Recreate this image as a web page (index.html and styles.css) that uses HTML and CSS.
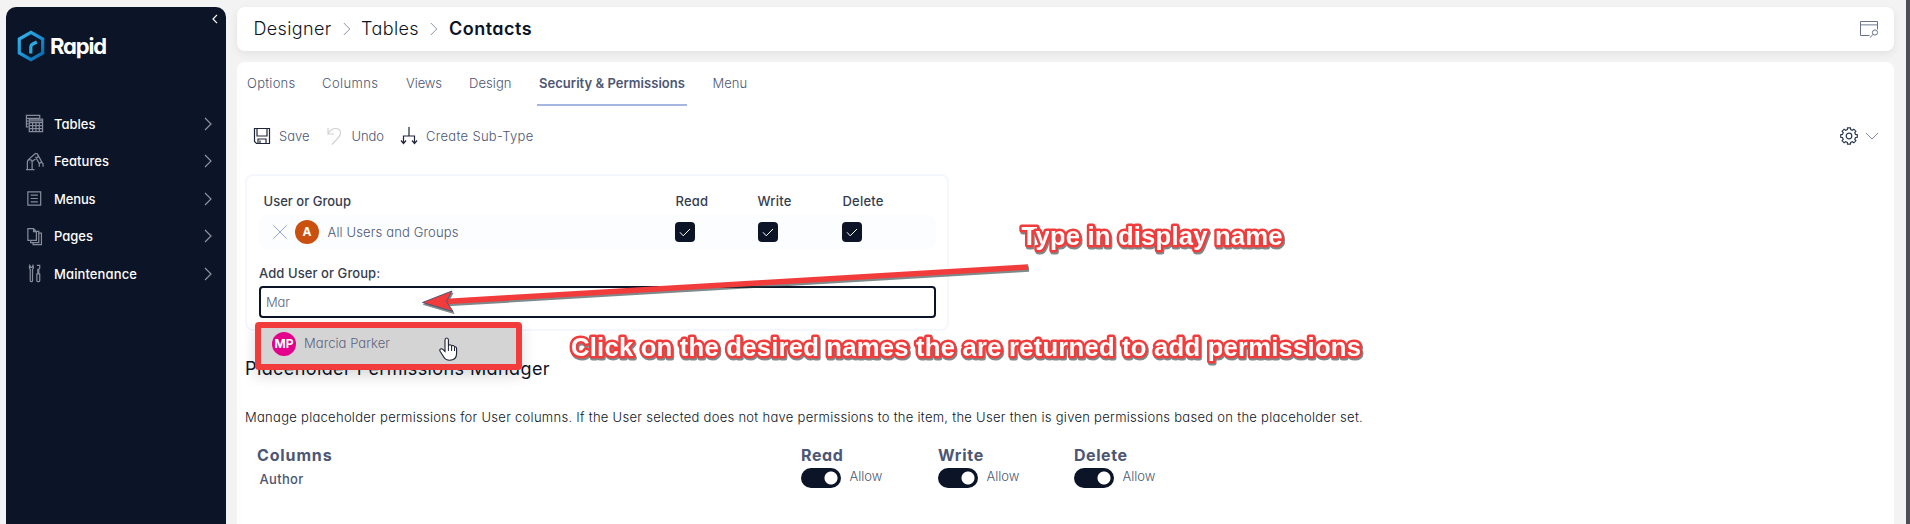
FILE: index.html
```html
<!DOCTYPE html>
<html lang="en">
<head>
<meta charset="utf-8">
<title>Rapid Designer - Contacts</title>
<link rel="stylesheet" href="styles.css">
</head>
<body>
<aside class="sidebar">
  <svg class="collapse" viewBox="0 0 6 10"><path d="M5 .8 1 5l4 4.2"/></svg>
  <div class="brand">
    <svg class="brand-mark" viewBox="0 0 28 32"><defs><linearGradient id="g" x1="0" y1="0" x2="1" y2="1"><stop offset="0" stop-color="#35b6ea"/><stop offset=".5" stop-color="#1a93d6"/><stop offset="1" stop-color="#0465ae"/></linearGradient></defs><path d="M14 2.300 25.700 9v14L14 29.700 2.300 23V9z" fill="none" stroke="url(#g)" stroke-width="3.200"/><path d="M13.800 23.500v-6.500q0-2 2-3l4-2" fill="none" stroke="#29abe2" stroke-width="3.200"/></svg>
    <span class="brand-name">Rapid</span>
  </div>
  <nav class="nav">
    <a class="nav-item"><svg class="nav-icon" viewBox="0 0 20 20"><path d="M3.500 13.500H1.500v-12h14v3M1.500 4.500h14M1.500 7.500h2M1.500 10.500h2M4.500 5.500h14v13h-14zM4.500 9h14M4.500 12.200h14M4.500 15.400h14M8 9v9.500M11.500 9v9.500M15 9v9.500M4.500 7.200h14"/></svg><span class="nav-label">Tables</span><svg class="chev" viewBox="0 0 8 14"><path d="m1 1 6 6-6 6"/></svg></a>
    <a class="nav-item"><svg class="nav-icon" viewBox="0 0 20 20"><path d="M1 18.500h9M2.500 18.500v-8q0-2.500 2.500-2.500t2.500 2.500v8M3.500 8 11 1.500l2 .5 1 3-6.500 5M13 2l5 9M11 5l4 7M15 15.500v-3l2-2 2 2v3M5 11h.5"/></svg><span class="nav-label features">Features</span><svg class="chev" viewBox="0 0 8 14"><path d="m1 1 6 6-6 6"/></svg></a>
    <a class="nav-item"><svg class="nav-icon" viewBox="0 0 20 20"><path d="M3 3h13.500v14H3zM6 6.500h7.500M6 10h7.500M6 13.500h7.500"/></svg><span class="nav-label menus">Menus</span><svg class="chev" viewBox="0 0 8 14"><path d="m1 1 6 6-6 6"/></svg></a>
    <a class="nav-item"><svg class="nav-icon" viewBox="0 0 20 20"><path d="M3 1.800h6l3 3v9.400H3zM9 1.800v3h3M12.500 4.500h2v12H6v-2M15 6.500h2.300v12H8.500v-2"/></svg><span class="nav-label">Pages</span><svg class="chev" viewBox="0 0 8 14"><path d="m1 1 6 6-6 6"/></svg></a>
    <a class="nav-item"><svg class="nav-icon" viewBox="0 0 20 20"><path d="M5 1.500q-1 3 .5 4v12q0 1 1.200 1t1.200-1v-12q1.500-1 .5-4l-1 2H6zM12.500 1.500h3v3l-1 1v5M13.500 5v5.500M12 10.500h4M12.500 10.500v7q0 1 1.500 1t1.500-1v-7"/></svg><span class="nav-label maintenance">Maintenance</span><svg class="chev" viewBox="0 0 8 14"><path d="m1 1 6 6-6 6"/></svg></a>
  </nav>
</aside>
<main class="main">
  <header class="topbar">
    <span class="crumb c1">Designer</span>
    <svg class="crumb-sep" viewBox="0 0 8 14"><path d="m.8 1 6 6-6 6"/></svg>
    <span class="crumb c2">Tables</span>
    <svg class="crumb-sep" viewBox="0 0 8 14"><path d="m.8 1 6 6-6 6"/></svg>
    <span class="crumb current">Contacts</span>
    <svg class="preview" viewBox="0 0 20 18"><path d="M10.500 15.500h-9v-14h17v8"/><path class="band" d="M2 4.800h16"/><circle cx="16" cy="12.500" r="2.600"/><path d="m14 14.500-3.200 3.200"/></svg>
  </header>
  <section class="panel">
    <nav class="tabs">
      <a class="tab t1">Options</a><a class="tab t2">Columns</a><a class="tab t3">Views</a><a class="tab t4">Design</a><a class="tab active">Security &amp; Permissions</a><a class="tab t6">Menu</a>
    </nav>
    <div class="toolbar">
      <svg class="tool-icon save" viewBox="0 0 18 18"><path d="M1.500 1.500h15v15h-13l-2-2zM4 1.500v7.500h10V1.500M5 16.500v-4.500h8v4.500M7 13.500v3"/></svg><span class="tool l1">Save</span>
      <svg class="tool-icon undo" viewBox="0 0 18 18"><path d="M2 1v6h6M2.200 6.500Q5 1.500 9.500 1.500q5 0 5 4.500 0 2.500-2.500 5l-6 6.500"/></svg><span class="tool l2">Undo</span>
      <svg class="tool-icon sub" viewBox="0 0 18 18"><path d="M9 0v9M3.500 16V9h11v7M1 13.500l2.500 3 2.500-3M12 13.500l2.500 3 2.500-3"/></svg><span class="tool l3">Create Sub-Type</span>
      <svg class="gear" viewBox="0 0 18 18"><path d="M7.300 2.600 7.600.8h2.800l.3 1.800 1.700.7 1.500-1.100 2 2-1.100 1.500.7 1.700 1.800.3v2.600l-1.800.3-.7 1.700 1.100 1.500-2 2-1.500-1.100-1.700.7-.3 1.800H7.600l-.3-1.800-1.700-.7-1.500 1.100-2-2 1.100-1.500-.7-1.700-1.800-.3V7.700l1.800-.3.7-1.700-1.100-1.500 2-2 1.500 1.100z"/><circle cx="9" cy="9" r="2.800"/></svg>
      <svg class="drop" viewBox="0 0 14 8"><path d="m1 1 6 6 6-6"/></svg>
    </div>
    <div class="perm-card">
      <div class="perm-head"><span class="group-head">User or Group</span><span>Read</span><span>Write</span><span>Delete</span></div>
      <div class="perm-row">
        <div class="who"><svg class="x" viewBox="0 0 14 14"><path d="m.5.5 13 13M13.500.5l-13 13"/></svg><span class="avatar orange">A</span><span class="who-name">All Users and Groups</span></div>
        <i class="check"><svg viewBox="0 0 12 9"><path d="m1 4.300 3.200 3.500L11 1"/></svg></i><i class="check"><svg viewBox="0 0 12 9"><path d="m1 4.300 3.200 3.500L11 1"/></svg></i><i class="check"><svg viewBox="0 0 12 9"><path d="m1 4.300 3.200 3.500L11 1"/></svg></i>
      </div>
      <div class="add-label">Add User or Group:</div>
      <div class="field"><span class="typed">Mar</span>
        <div class="suggest"><span class="avatar pink">MP</span><span class="sug-name">Marcia Parker</span></div>
      </div>
    </div>
    <h2 class="title">Placeholder Permissions Manager</h2>
    <p class="desc">Manage placeholder permissions for User columns. If the User selected does not have permissions to the item, the User then is given permissions based on the placeholder set.</p>
    <div class="grid">
      <div class="col"><b class="h-columns">Columns</b><span class="author">Author</span></div>
      <div class="col"><b>Read</b><div class="switch"><i></i><span>Allow</span></div></div>
      <div class="col"><b class="h-write">Write</b><div class="switch"><i></i><span>Allow</span></div></div>
      <div class="col"><b class="h-delete">Delete</b><div class="switch"><i></i><span>Allow</span></div></div>
    </div>
  </section>
</main>
<div class="edge"></div>
<svg class="callouts" viewBox="0 0 1910 524">
  <g class="red">
    <path d="M1028 267 446 301.500" fill="none" stroke="#f23c3c" stroke-width="5.600"/>
    <path d="M422.500 302.500 452 291l-5.500 10.500 6.500 10z" fill="#f23c3c"/>
    <text class="note" x="1021.500" y="245" textLength="261">Type in display name</text>
    <text class="note" x="571" y="356" textLength="790">Click on the desired names the are returned to add permissions</text>
  </g>
  <path d="M445 351.500v-11.500q0-2 1.700-2t1.700 2v6q.3-1.300 1.700-1.200 1.300.1 1.500 1.500.5-1 1.600-.8 1.200.2 1.300 1.700.5-.6 1.200-.3.900.4.900 1.800v4.500q0 7-7 7-4 0-6-3.500l-3.500-5.500q-.8-1.600.5-2.200t2.500.6z" fill="#fff" stroke="#1b1f33" stroke-width="1.100"/>
  <path d="M448.400 346v5M451.600 347v4M454.500 348v3" stroke="#1b1f33"/>
</svg>
</body>
</html>
```
FILE: styles.css
```css
* { box-sizing: border-box; }
body {
  margin: 0; height: 524px; overflow: hidden; display: flex; position: relative;
  background: #f3f3f3; color: #4c5675;
  font: 300 13px/20px Inter, "Open Sans", sans-serif;
  font-feature-settings: "cv11";
}
svg { fill: none; stroke: currentColor; flex: none; display: block; }
span, a, b { white-space: nowrap; }

/* Sidebar */
.sidebar { width: 220px; margin: 7px 11px 0 6px; background: #0c1428; border-radius: 10px 10px 0 0; color: #fff; flex: none; position: relative; }
.collapse { position: absolute; width: 6px; height: 10px; top: 7px; right: 8px; stroke-width: 1.200; }
.brand { display: flex; align-items: center; gap: 5px; padding: 23px 0 0 11px; height: 55px; }
.brand-mark { width: 28px; height: 32px; }
.brand-name { font-size: 22px; font-weight: 700; line-height: 30px; letter-spacing: -1.150px; }
.nav { padding: 43px 14px 0 19px; display: grid; grid-auto-rows: 37.500px; }
.nav-item { display: grid; grid-template-columns: 29px 1fr 8px; align-items: center; }
.nav-icon { width: 19px; height: 19px; color: #868b99; stroke-width: 1.300; }
.nav-label { font-weight: 500; justify-self: start; }
.features { letter-spacing: .059px; }
.menus { letter-spacing: -.131px; }
.maintenance { letter-spacing: .114px; }
.chev { width: 8px; height: 14px; color: #8e939f; stroke-width: 1.200; }

/* Breadcrumb bar */
.main { flex: 1; min-width: 0; display: flex; flex-direction: column; gap: 11px; padding: 7px 12px 0 0; }
.topbar { height: 44px; background: #fff; border-radius: 8px; box-shadow: 0 3px 8px rgba(0,0,0,.07); display: flex; align-items: center; padding: 0 15px 0 16.500px; flex: none; }
.crumb { font-size: 18px; line-height: 24px; color: #0c1428; letter-spacing: .348px; }
.c1 { width: 89px; }
.c2 { margin-left: 10.500px; width: 77.500px; letter-spacing: .393px; }
.current { font-weight: 600; margin-left: 11.500px; letter-spacing: .471px; }
.crumb-sep { width: 8px; height: 14px; color: #8c94a6; stroke-width: 1; }
.crumb-sep ~ .crumb-sep { margin-left: -9px; }
.preview { width: 20px; height: 18px; margin-left: auto; color: #68708a; }
.preview .band { stroke: #a3adb6; stroke-width: 1.600; }

/* Tabs and toolbar */
.panel { flex: 1; background: #fff; border-radius: 8px 8px 0 0; padding: 11px 8px 0; }
.tabs { display: flex; height: 33px; padding-left: 2px; }
.tab { height: 33px; }
.t1 { width: 75px; letter-spacing: .261px; }
.t2 { width: 84px; letter-spacing: .42px; }
.t3 { width: 63px; letter-spacing: -.081px; }
.t4 { width: 68px; letter-spacing: .063px; }
.active { font-weight: 600; border-bottom: 2px solid #a5b7e0; padding: 0 2px; width: 150px; margin-right: 25.500px; letter-spacing: .04px; }
.toolbar { display: flex; align-items: center; height: 20px; margin-top: 20px; padding: 0 7px 0 8px; }
.tool-icon { width: 18px; height: 18px; color: #20263a; stroke-width: 1.200; }
.l1 { margin-left: 8px; width: 47px; }
.l2 { margin-left: 7.500px; width: 48.500px; letter-spacing: -.063px; }
.l3 { margin-left: 8px; letter-spacing: .305px; }
.undo { color: #d2d2d4; }
.gear { width: 18px; height: 18px; margin-left: auto; color: #2b3850; stroke-width: 1.200; }
.drop { width: 14px; height: 8px; margin-left: 7px; color: #7f88a0; }

/* Permission card */
.perm-card { width: 704px; height: 157px; margin-top: 28px; border: 2px solid #f4f7fd; border-radius: 8px; padding: 15px 11px 0 12px; color: #343c50; }
.perm-head, .perm-row { display: grid; grid-template-columns: 416px 83px 84px 1fr; }
.perm-head { padding-left: 4.500px; grid-template-columns: 412px 82px 85px 1fr; font-weight: 500; letter-spacing: .21px; }
.group-head { letter-spacing: .014px; }
.perm-row { height: 34px; margin-top: 4px; background: #fcfdff; border-radius: 8px; align-items: center; color: #4c5675; }
.who { display: flex; align-items: center; padding-left: 14px; }
.x { width: 14px; height: 14px; color: #95a4ca; margin-right: 8px; }
.avatar { width: 24px; height: 24px; border-radius: 50%; color: #fff; font-weight: 700; font-size: 12px; line-height: 24px; text-align: center; }
.orange { background: #ca5010; }
.pink { background: #e3008c; }
.who-name { margin-left: 8.500px; letter-spacing: .134px; }
.check { width: 20px; height: 20px; border-radius: 4px; background: #0c1428; color: #fff; display: grid; place-items: center; }
.check svg { width: 12px; height: 9px; }
.add-label { margin-top: 14px; font-weight: 500; letter-spacing: .07px; }
.field { position: relative; height: 32px; margin-top: 3px; border: 2px solid #0c1428; border-radius: 4px; padding: 4px 5px; color: #5c6480; }
.typed { letter-spacing: -.1px; }
.suggest { position: absolute; left: -6px; top: 34px; width: 267px; height: 48px; border: 6px solid #f23c3c; border-radius: 4px; background: #d4d4d4; display: flex; align-items: center; padding: 0 0 4px 11px; box-shadow: 0 6px 14px rgba(0,0,0,.15); }
.sug-name { margin-left: 8px; margin-top: -2px; letter-spacing: .055px; }

/* Placeholder permissions */
.title { margin: 26px 0 0; font-size: 18px; line-height: 24px; font-weight: 400; color: #0c1428; letter-spacing: .404px; }
.desc { margin: 26px 0 0; color: #0c1428; letter-spacing: .285px; white-space: nowrap; }
.grid { display: grid; grid-template-columns: 544px 137px 136px 1fr; margin-top: 17px; padding-left: 12px; }
.col { display: flex; flex-direction: column; align-items: flex-start; }
.col b { font-size: 16px; font-weight: 700; line-height: 22px; letter-spacing: .621px; }
.col .h-columns { letter-spacing: .862px; }
.col .h-write { letter-spacing: .747px; }
.col .h-delete { letter-spacing: .552px; }
.author { font-weight: 500; margin: 3px 0 0 2.500px; letter-spacing: .302px; }
.switch { display: flex; height: 20px; margin-top: 2px; }
.switch i { width: 40px; height: 20px; border-radius: 10px; background: radial-gradient(circle 8px at 30px 10px, #fff 6px, #0c1428 7px); margin-right: 8.500px; }
.switch span { margin-top: -2px; }

.edge { width: 4px; background: #4c4e58; flex: none; }

/* Annotations over the page */
.callouts { position: absolute; inset: 0; width: 1910px; height: 524px; pointer-events: none; }
.red { filter: drop-shadow(1px 2px .5px rgba(40,60,60,.6)); }
.note { font: 700 25.700px "Liberation Sans", Arial, sans-serif; fill: #fff; stroke: #f23c3c; stroke-width: 5px; stroke-linejoin: round; paint-order: stroke; }
```
